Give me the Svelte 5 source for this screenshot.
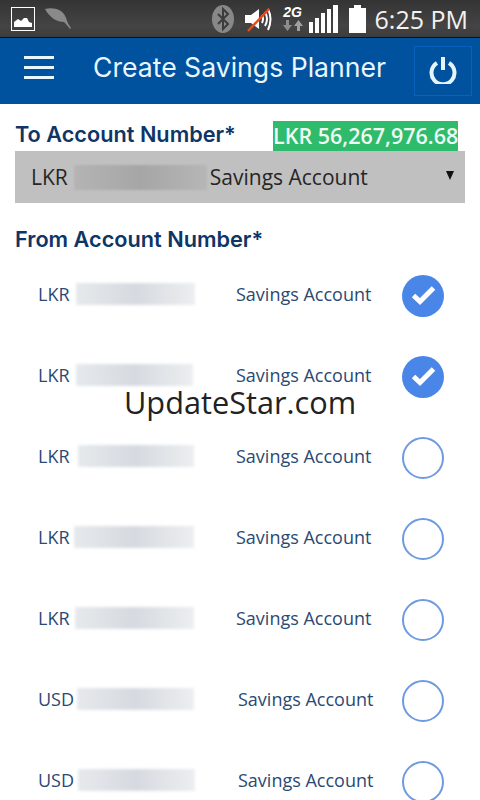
<script lang="ts">
    type Row = { currency: string; checked: boolean; blurLeft: number; blurWidth: number; typeAt: number };

    const rows: Row[] = [
        { currency: 'LKR', checked: true, blurLeft: 6, blurWidth: 119, typeAt: 198 },
        { currency: 'LKR', checked: true, blurLeft: 6, blurWidth: 117, typeAt: 198 },
        { currency: 'LKR', checked: false, blurLeft: 8, blurWidth: 116, typeAt: 198 },
        { currency: 'LKR', checked: false, blurLeft: 4, blurWidth: 120, typeAt: 198 },
        { currency: 'LKR', checked: false, blurLeft: 5, blurWidth: 119, typeAt: 198 },
        { currency: 'USD', checked: false, blurLeft: 7, blurWidth: 117, typeAt: 200 },
        { currency: 'USD', checked: false, blurLeft: 8, blurWidth: 117, typeAt: 200 }
    ];
</script>

<div class="screen">
    <div class="status-bar">
        <div class="status-left">
            <svg class="pic-icon" width="24" height="24" viewBox="0 0 24 24">
                <rect x="0.5" y="0.5" width="23" height="23" fill="none" stroke="#fff" />
                <path d="M3 20 L3 15 L7 12 L10 14 L13 11 L16 11 L18 15 L21 16 L21 20 Z" fill="#fff" />
            </svg>
            <svg class="leaf-icon" width="28" height="24" viewBox="0 0 28 24">
                <path d="M1 2 C9 0 19 2 22 11 C23 15 25 18 27 21 L26 22 C24 19 22 17 20 15 C13 15 6 11 1 2 Z" fill="#8a8a8a" />
            </svg>
        </div>
        <div class="status-right">
            <svg class="bt-icon" width="24" height="30" viewBox="0 0 24 30">
                <ellipse cx="12" cy="15" rx="11" ry="14" fill="#888" />
                <path d="M7 10 L17 20 L12 25 L12 5 L17 10 L7 20" fill="none" stroke="#3c3c3c" stroke-width="2" />
            </svg>
            <svg class="vol-icon" width="30" height="26" viewBox="0 0 30 26">
                <path d="M1 9 L7 9 L15 3 L15 23 L7 17 L1 17 Z" fill="#fff" />
                <path d="M18 9 Q20 13 18 17 M21 6 Q25 13 21 20 M24 3 Q29 13 24 24" fill="none" stroke="#fff" stroke-width="2" />
                <path d="M4 25 L25 3" stroke="#e8491d" stroke-width="2.5" />
            </svg>
            <div class="net">
                <span class="net-label">2G</span>
                <svg width="22" height="13" viewBox="0 0 22 13">
                    <path d="M7 1 L7 6 L10 6 L5.5 12 L1 6 L4 6 L4 1 Z" fill="#8c8c8c" />
                    <path d="M18 12 L18 7 L21 7 L16.5 1 L12 7 L15 7 L15 12 Z" fill="#a0a0a0" />
                </svg>
            </div>
            <svg class="signal" width="29" height="28" viewBox="0 0 29 28">
                <rect x="0" y="17" width="4" height="11" fill="#fff" />
                <rect x="6" y="13" width="4" height="15" fill="#fff" />
                <rect x="12" y="8" width="4" height="20" fill="#fff" />
                <rect x="18" y="4" width="4" height="24" fill="#fff" />
                <rect x="24" y="0" width="5" height="28" fill="#fff" />
            </svg>
            <svg class="battery" width="17" height="28" viewBox="0 0 17 28">
                <path d="M5 0 H12 V3 H17 V28 H0 V3 H5 Z" fill="#fff" />
            </svg>
            <span class="clock">6:25 PM</span>
        </div>
    </div>

    <header class="app-bar">
        <div class="menu-icon"><span></span><span></span><span></span></div>
        <h1>Create Savings Planner</h1>
        <button type="button" class="power" aria-label="Log out">
            <svg width="28" height="27" viewBox="0 0 28 27">
                <path d="M8 6 A11.5 11.5 0 1 0 20 6" fill="none" stroke="#e6f4fb" stroke-width="4" />
                <path d="M14 0 V13" stroke="#e6f4fb" stroke-width="4" />
            </svg>
        </button>
    </header>

    <main class="content">
        <div class="to-head">
            <h2>To Account Number*</h2>
            <span class="balance">LKR 56,267,976.68</span>
        </div>
        <div class="select">
            <span>LKR</span>
            <span class="select-blur"></span>
            <span>Savings Account</span>
            <span class="caret"></span>
        </div>

        <h2 class="from-label">From Account Number*</h2>

        <div class="rows">
            {#each rows as row}
                <div class="row">
                    <div class="account" style="width: {row.typeAt}px">
                        <span class="currency">{row.currency}</span>
                        <span class="blur" style="margin-left: {row.blurLeft}px; width: {row.blurWidth}px"></span>
                    </div>
                    <span class="type">Savings Account</span>
                    {#if row.checked}
                        <span class="radio checked">
                            <svg width="42" height="42" viewBox="0 0 42 42">
                                <path d="M11.5 20.5 L18 26.5 L31.5 13" fill="none" stroke="#fff" stroke-width="5" />
                            </svg>
                        </span>
                    {:else}
                        <span class="radio"></span>
                    {/if}
                </div>
            {/each}
        </div>
    </main>

    <div class="watermark">UpdateStar.com</div>
</div>

<style>
    :global(body) {
        margin: 0;
        background: #fff;
    }

    .screen {
        position: relative;
        width: 480px;
        height: 800px;
        overflow: hidden;
        background: #fff;
        font-family: "Open Sans", sans-serif;
    }

    .status-bar {
        display: flex;
        justify-content: space-between;
        align-items: center;
        height: 38px;
        padding: 0 12px 0 11px;
        box-sizing: border-box;
        border-bottom: 1px solid #111;
        background: linear-gradient(#343434, #444 70%, #3c3c3c);
    }

    .status-left,
    .status-right {
        display: flex;
        align-items: center;
    }

    .status-left {
        gap: 9px;
    }

    .bt-icon {
        margin-right: 9px;
    }

    .vol-icon {
        margin-right: 7px;
    }

    .net {
        display: flex;
        flex-direction: column;
        align-items: center;
        width: 24px;
        margin-right: 4px;
    }

    .net-label {
        color: #fff;
        font: italic bold 14px/14px "Liberation Sans", sans-serif;
    }

    .signal {
        margin-right: 11px;
    }

    .battery {
        margin-right: 9px;
    }

    .clock {
        color: #f2f2f2;
        font-size: 25px;
        line-height: 30px;
        white-space: nowrap;
    }

    .app-bar {
        display: flex;
        align-items: center;
        height: 66px;
        padding: 0 8px 0 24px;
        box-sizing: border-box;
        background: #00519e;
    }

    .menu-icon {
        display: flex;
        flex-direction: column;
        gap: 7px;
        width: 30px;
        margin-bottom: 7px;
    }

    .menu-icon span {
        height: 3px;
        background: #e8f6fd;
    }

    h1 {
        flex: 1;
        margin: 0 0 8px 39px;
        color: #e8f6fd;
        font: 400 26.6px "Inter", sans-serif;
        white-space: nowrap;
    }

    .power {
        display: flex;
        align-items: center;
        justify-content: center;
        width: 58px;
        height: 50px;
        padding: 0 0 2px;
        border: 1px solid #0a61bd;
        background: transparent;
    }

    .content {
        padding: 0 15px;
    }

    .to-head {
        display: flex;
        justify-content: space-between;
        height: 47px;
        padding-right: 7px;
    }

    h2 {
        margin: 0;
        color: #0e3566;
        font: 600 21.7px/28px "Inter", sans-serif;
        white-space: nowrap;
    }

    .to-head h2 {
        margin-top: 16px;
    }

    .balance {
        align-self: flex-end;
        width: 185px;
        color: #eefaf2;
        background: #2fbb6c;
        font-size: 21.5px;
        font-weight: 600;
        line-height: 30px;
        text-align: center;
        white-space: nowrap;
    }

    .select {
        display: flex;
        align-items: center;
        height: 52px;
        padding-left: 16px;
        background: #c0c0c0;
        color: #262626;
        font-size: 21px;
    }

    .select-blur {
        width: 133px;
        height: 25px;
        margin: 0 3px 0 6px;
        background: linear-gradient(90deg, #b4b4b4, #a6a6a6 50%, #b6b6b6);
        filter: blur(1px);
    }

    .caret {
        width: 0;
        height: 0;
        margin: -4px 0 0 78px;
        border-top: 9px solid #111;
        border-left: 4px solid transparent;
        border-right: 4px solid transparent;
    }

    .from-label {
        margin-top: 22px;
    }

    .rows {
        display: flex;
        flex-direction: column;
        gap: 39px;
        margin-top: 22px;
    }

    .row {
        display: flex;
        align-items: center;
        height: 42px;
        padding-left: 23px;
        color: #2a4a72;
        font-size: 18px;
    }

    .account {
        display: flex;
        align-items: center;
        flex-shrink: 0;
        padding-bottom: 4px;
    }

    .currency {
        width: 32px;
    }

    .blur {
        height: 22px;
        background: linear-gradient(90deg, #e6e9ec, #d6dae0 50%, #eceef0);
        filter: blur(1.5px);
    }

    .type {
        flex: 1;
        padding-bottom: 4px;
        white-space: nowrap;
    }

    .radio {
        flex-shrink: 0;
        width: 42px;
        height: 42px;
        margin-right: 21px;
        box-sizing: border-box;
        border: 2px solid #6e9ae2;
        border-radius: 50%;
    }

    .radio.checked {
        border: 0;
        background: #4a86e8;
    }

    .radio svg {
        display: block;
    }

    .watermark {
        position: absolute;
        left: 124px;
        top: 380px;
        color: #222;
        font: 400 30.7px/44px "Open Sans", sans-serif;
        white-space: nowrap;
    }
</style>
